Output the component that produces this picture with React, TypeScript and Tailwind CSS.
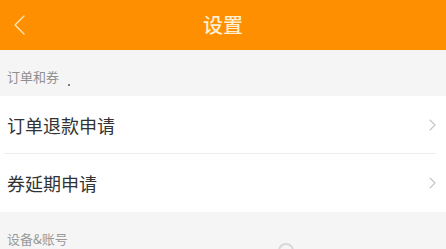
import React from 'react';

const font = { fontFamily: '"Noto Sans CJK SC", "Noto Sans", sans-serif' };

function Chevron() {
  return (
    <svg width="7" height="12" viewBox="0 0 7 12" fill="none" stroke="#c4c4c4" strokeWidth="1.1" strokeLinecap="round" strokeLinejoin="round">
      <path d="M1 1l5 5-5 5" />
    </svg>
  );
}

function Row({ label, divider }: { label: string; divider?: boolean }) {
  return (
    <div className="relative flex h-[58px] items-center justify-between bg-white pl-[7px] pr-[10px]">
      <span className="text-[18px] leading-none text-[#333]">{label}</span>
      <Chevron />
      {divider && <div className="absolute bottom-0 left-[4px] right-[10px] h-px bg-[#ececec]" />}
    </div>
  );
}

export default function App() {
  return (
    <div className="h-[249px] w-[446px] overflow-hidden bg-[#f5f5f5]" style={font}>
      <div className="relative flex h-[50px] items-center justify-center bg-[#fe8f00]">
        <svg className="absolute left-[14px] top-[15px]" width="11" height="20" viewBox="0 0 11 20" fill="none" stroke="#fde7c4" strokeWidth="1.3" strokeLinecap="round" strokeLinejoin="round">
          <path d="M10 1L1 10l9 9" />
        </svg>
        <span className="text-[20px] font-medium text-[#fff0d4]">设置</span>
      </div>
      <div className="flex h-[46px] items-center pl-[7px] pt-[8px]">
        <span className="text-[13px] text-[#8f8f8f]">订单和券</span>
        <span className="ml-[9px] mt-[16px] h-[2px] w-[2px] rounded-full bg-[#555]" />
      </div>
      <Row label="订单退款申请" divider />
      <Row label="券延期申请" />
      <div className="relative flex h-[37px] items-end pl-[7px] pb-[1px]">
        <span className="text-[13px] text-[#9a9a9a]">设备&amp;账号</span>
        <div className="absolute left-[278px] top-[31px] h-[16px] w-[16px] rounded-full border-2 border-[#d8d8d8]" />
      </div>
    </div>
  );
}
